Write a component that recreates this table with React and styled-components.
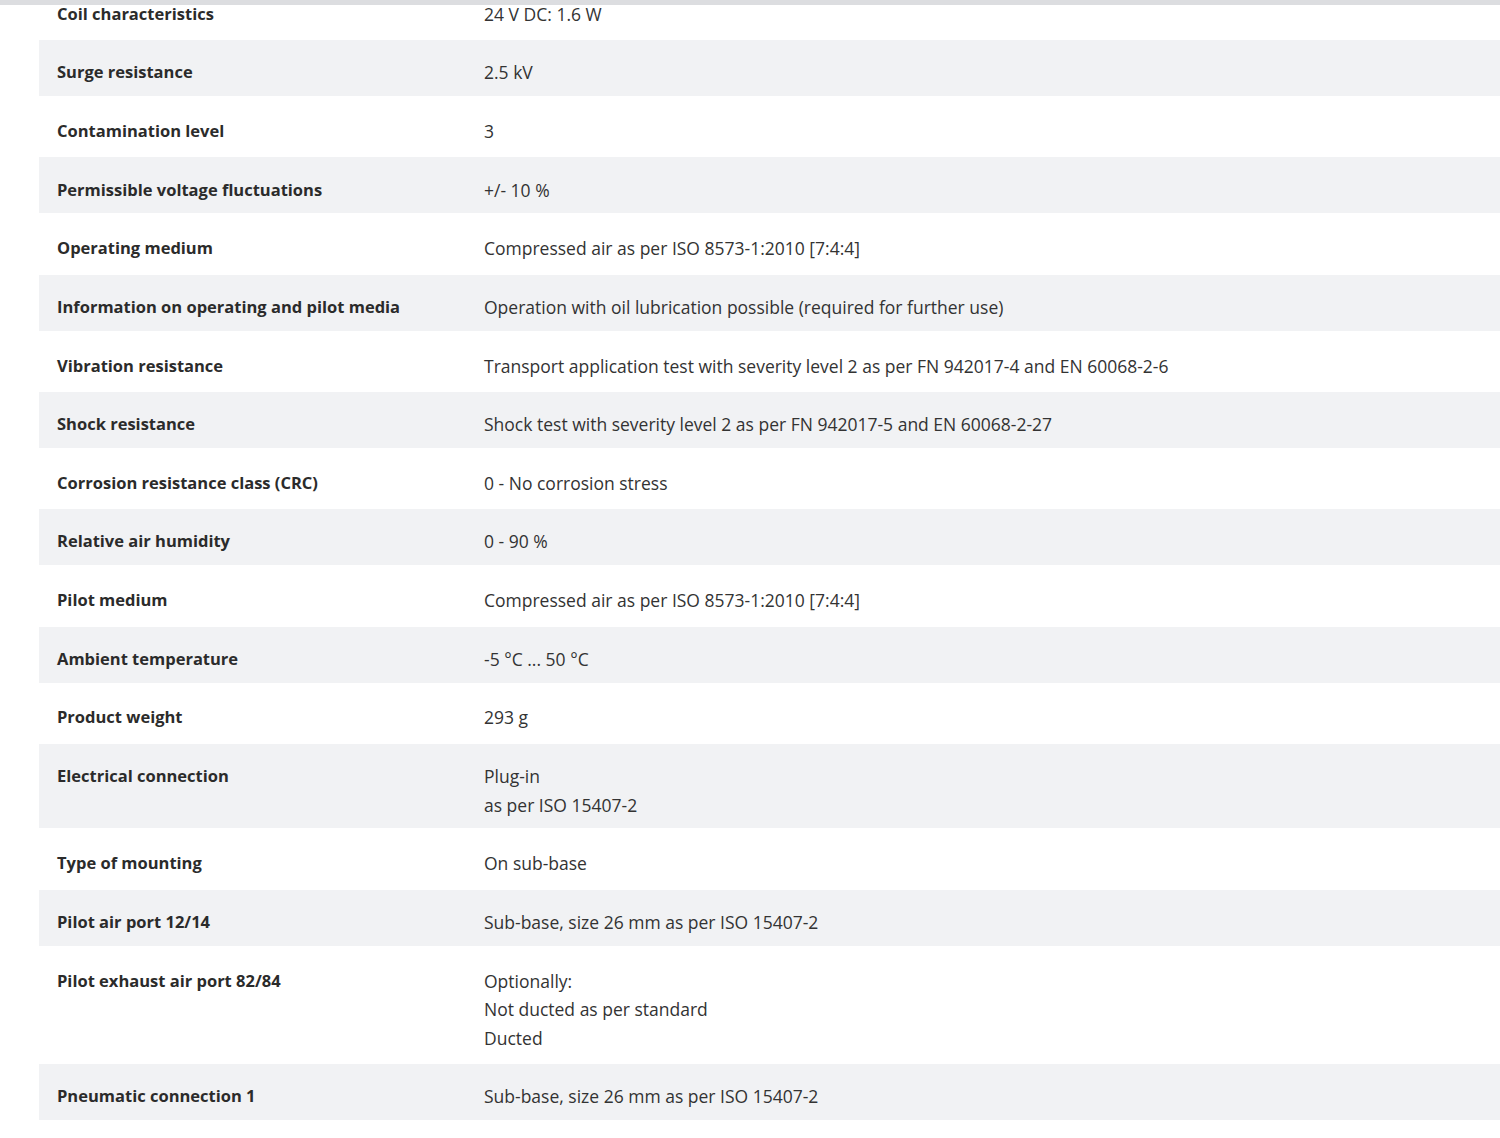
import React from 'react'
import styled, { createGlobalStyle } from 'styled-components'

const GlobalStyle = createGlobalStyle`
  html, body {
    margin: 0;
    padding: 0;
    background: #fff;
    overflow: hidden;
  }
  body {
    font-family: 'Open Sans', 'Noto Sans', sans-serif;
    color: #333;
  }
`

const specs = [
  ['Coil characteristics', ['24 V DC: 1.6 W']],
  ['Surge resistance', ['2.5 kV']],
  ['Contamination level', ['3']],
  ['Permissible voltage fluctuations', ['+/- 10 %']],
  ['Operating medium', ['Compressed air as per ISO 8573-1:2010 [7:4:4]']],
  ['Information on operating and pilot media', ['Operation with oil lubrication possible (required for further use)']],
  ['Vibration resistance', ['Transport application test with severity level 2 as per FN 942017-4 and EN 60068-2-6']],
  ['Shock resistance', ['Shock test with severity level 2 as per FN 942017-5 and EN 60068-2-27']],
  ['Corrosion resistance class (CRC)', ['0 - No corrosion stress']],
  ['Relative air humidity', ['0 - 90 %']],
  ['Pilot medium', ['Compressed air as per ISO 8573-1:2010 [7:4:4]']],
  ['Ambient temperature', ['-5 °C ... 50 °C']],
  ['Product weight', ['293 g']],
  ['Electrical connection', ['Plug-in', 'as per ISO 15407-2']],
  ['Type of mounting', ['On sub-base']],
  ['Pilot air port 12/14', ['Sub-base, size 26 mm as per ISO 15407-2']],
  ['Pilot exhaust air port 82/84', ['Optionally:', 'Not ducted as per standard', 'Ducted']],
  ['Pneumatic connection 1', ['Sub-base, size 26 mm as per ISO 15407-2']],
]

const App = () => {
  return (
    <>
      <GlobalStyle />
      <TopBar />
      <Page>
        <SpecList>
          {specs.map(([label, values], i) => (
            <Row key={label}>
              <RowInner $striped={i % 2 === 1}>
                <Label>{label}</Label>
                <Value>
                  {values.map((v) => (
                    <span key={v}>{v}</span>
                  ))}
                </Value>
              </RowInner>
            </Row>
          ))}
        </SpecList>
      </Page>
    </>
  )
}

// leftover of the sticky header, sits over the scrolled list
const TopBar = styled.div`
  position: fixed;
  top: 0;
  left: 0;
  right: 0;
  height: 5px;
  background: #dcdde0;
  z-index: 2;
`

const Page = styled.div`
  margin-top: -20px;
  padding-left: 39px;
`

const SpecList = styled.div`
  display: flex;
  flex-direction: column;
`

const Row = styled.div`
  padding: 1.33px 0;
`

const RowInner = styled.div`
  display: grid;
  grid-template-columns: 427px 1fr;
  padding: 18.25px 0 9.25px 18px;
  background: ${(p) => (p.$striped ? '#f1f2f4' : '#fff')};
  line-height: 28.5px;
`

const Label = styled.div`
  font-size: 16.5px;
  font-weight: 700;
  color: #2b2b2b;
`

const Value = styled.div`
  display: flex;
  flex-direction: column;
  font-size: 17.5px;
  color: #333;
`

export default App
